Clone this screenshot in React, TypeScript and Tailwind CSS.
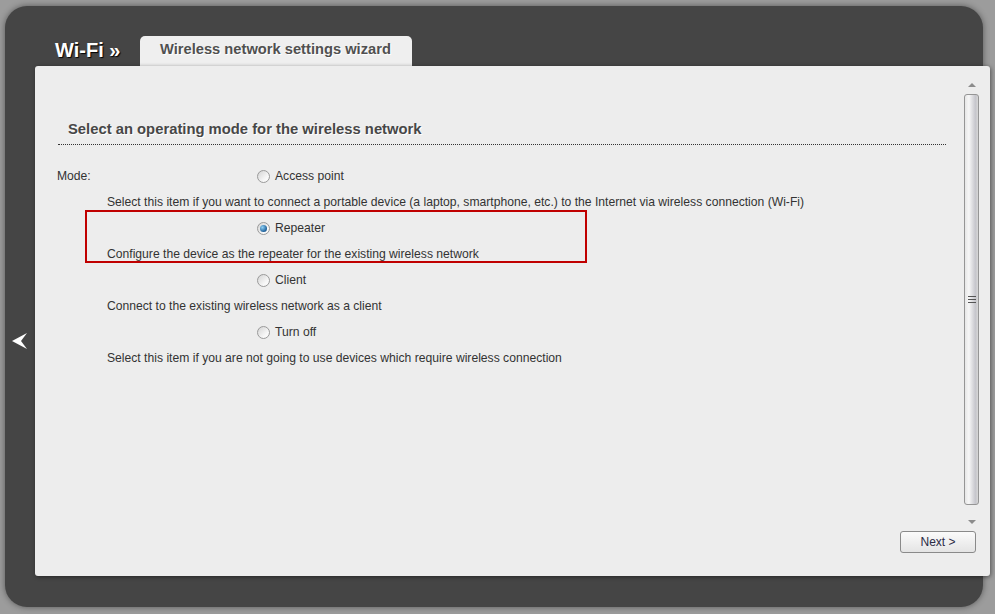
import type { ReactNode } from 'react'

const MODES = [
  {
    label: 'Access point',
    desc: 'Select this item if you want to connect a portable device (a laptop, smartphone, etc.) to the Internet via wireless connection (Wi-Fi)',
    checked: false
  },
  {
    label: 'Repeater',
    desc: 'Configure the device as the repeater for the existing wireless network',
    checked: true
  },
  {
    label: 'Client',
    desc: 'Connect to the existing wireless network as a client',
    checked: false
  },
  {
    label: 'Turn off',
    desc: 'Select this item if you are not going to use devices which require wireless connection',
    checked: false
  }
]

function Radio({ checked }: { checked: boolean }) {
  return (
    <span className="w-[13px] h-[13px] rounded-full border border-[#9a9a9a] bg-[linear-gradient(135deg,#d4d4d4,#f8f8f8_70%)] flex items-center justify-center shrink-0">
      {checked && (
        <span className="w-[7px] h-[7px] rounded-full bg-[radial-gradient(circle_at_35%_35%,#8fd0f5,#1d5f99_70%,#0c3a66)]" />
      )}
    </span>
  )
}

function Row({ children, className = '' }: { children: ReactNode; className?: string }) {
  return <div className={`h-[26px] flex items-center ${className}`}>{children}</div>
}

export default function App() {
  return (
    <div className="w-[995px] h-[614px] bg-[#9c9c9c] pt-[6px] pl-[5px] font-['Liberation_Sans',Arial,sans-serif] text-[12px] text-[#333]">
      <div className="w-[978px] h-[601px] rounded-[22px] bg-[#454545] shadow-[0_0_6px_rgba(0,0,0,0.45)] flex flex-col">

        {/* Header */}
        <div className="h-[60px] pl-[50px] flex items-end">
          <div className="w-[85px] h-[30px] leading-[28px] text-[20px] font-bold text-white [text-shadow:1px_1px_1px_#000]">
            Wi-Fi »
          </div>
          <div className="w-[272px] h-[30px] rounded-t-[5px] bg-[#efefef] pl-[20px] leading-[26px] text-[14.7px] font-bold text-[#505050] [text-shadow:1px_1px_0_#fff]">
            Wireless network settings wizard
          </div>
        </div>

        <div className="flex">
          {/* Back arrow */}
          <div className="w-[30px] shrink-0 pt-[267px] flex justify-center">
            <svg width="16" height="16" viewBox="0 0 16 16">
              <polygon points="0,8 15,0 9,8 15,16" fill="#fff" />
            </svg>
          </div>

          {/* Light panel */}
          <div className="relative w-[955px] h-[510px] shrink-0 rounded-[3px] bg-[#ededed] shadow-[1px_1px_4px_rgba(0,0,0,0.45)] flex flex-col">
            <div className="h-[460px] flex">
              <div className="flex-1 pt-[53px] pl-[22px]">
                <div className="ml-[1px] mr-[18px] h-[26px] pl-[10px] leading-[20px] text-[14.8px] font-bold text-[#474747] [text-shadow:1px_1px_0_#fff] border-b border-dotted border-[#333]">
                  Select an operating mode for the wireless network
                </div>

                <div className="mt-[18px] text-[12.15px]">
                  {MODES.map((m, i) => (
                    <div key={m.label}>
                      <Row>
                        <span className="w-[200px]">{i === 0 ? 'Mode:' : ''}</span>
                        <Radio checked={m.checked} />
                        <span className="ml-[5px]">{m.label}</span>
                      </Row>
                      <Row className="pl-[50px]">{m.desc}</Row>
                    </div>
                  ))}
                </div>
              </div>

              {/* Scrollbar */}
              <div className="w-[15px] mr-[11px] pt-[17px] flex flex-col items-center">
                <span className="w-0 h-0 border-x-[4px] border-x-transparent border-b-[4px] border-b-[#8c8c8c]" />
                <div className="mt-[7px] w-[15px] h-[411px] rounded-[3px] border border-[#959595] bg-[linear-gradient(to_right,#e6e6e6,#f7f7f7_30%,#c6c6cc_80%,#d6d6d6)] flex flex-col items-center justify-center gap-[2px]">
                  <span className="w-[8px] h-[1px] bg-[#555]" />
                  <span className="w-[8px] h-[1px] bg-[#555]" />
                  <span className="w-[8px] h-[1px] bg-[#555]" />
                </div>
                <span className="mt-[15px] w-0 h-0 border-x-[4px] border-x-transparent border-t-[4px] border-t-[#8c8c8c]" />
              </div>
            </div>

            {/* Footer */}
            <div className="pt-[5px] pr-[14px] flex justify-end">
              <button className="w-[76px] h-[22px] rounded-[3px] border border-[#8a8a8a] bg-[linear-gradient(#fbfbfb,#e4e4e4)] text-[12px] text-[#2b2b45]">
                Next &gt;
              </button>
            </div>

            {/* Highlight annotation */}
            <div className="absolute left-[50px] top-[144px] w-[502px] h-[53px] border-2 border-[#c00000]" />
          </div>
        </div>
      </div>
    </div>
  )
}
